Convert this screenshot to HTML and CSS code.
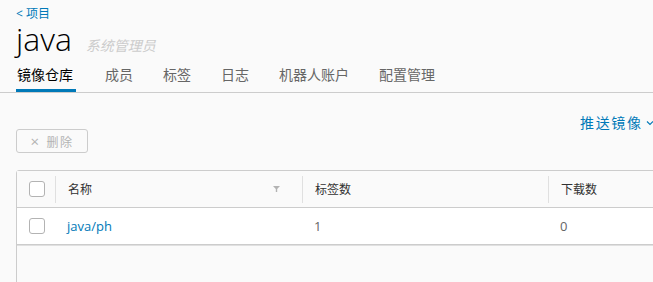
FILE: index.html
```html
<!DOCTYPE html>
<html lang="zh">
<head>
    <meta charset="UTF-8">
    <title>java - 镜像仓库</title>
    <link rel="stylesheet" href="styles.css">
</head>
<body>
    <div class="page">
        <a class="back" href="#">&lt; 项目</a>

        <div class="title">
            <h1>java</h1>
            <span class="role">系统管理员</span>
        </div>

        <ul class="tabs">
            <li class="active">镜像仓库</li>
            <li>成员</li>
            <li>标签</li>
            <li>日志</li>
            <li>机器人账户</li>
            <li>配置管理</li>
        </ul>

        <div class="toolbar">
            <button class="btn-delete" disabled><span class="x">×</span>删除</button>
            <a class="push" href="#">推送镜像
                <svg width="8" height="6" viewBox="0 0 8 6"><path d="M1 1.5 L4 4.5 L7 1.5" fill="none" stroke="#0079b8" stroke-width="1.1"/></svg>
            </a>
        </div>

        <div class="grid">
            <div class="row head">
                <div class="cell check"><span class="box"></span></div>
                <div class="cell">名称
                    <svg class="filter" width="7" height="6" viewBox="0 0 7 6"><path d="M0 0 H7 L4.2 3 V6 H2.8 V3 Z" fill="#b3b3b3"/></svg>
                </div>
                <div class="cell">标签数</div>
                <div class="cell">下载数</div>
            </div>
            <div class="row body-row">
                <div class="cell check"><span class="box"></span></div>
                <div class="cell"><a href="#">java/ph</a></div>
                <div class="cell num">1</div>
                <div class="cell num">0</div>
            </div>
            <div class="foot"></div>
        </div>
    </div>
</body>
</html>
```

FILE: styles.css
```css
html, body {
    overflow: hidden;
}
body {
    margin: 0;
    background-color: #fafafa;
    font-family: "Open Sans", "Noto Sans CJK SC", sans-serif;
    color: #565656;
}
.page {
    padding-left: 16px;
    width: 900px;
}
a {
    color: #0079b8;
    text-decoration: none;
}
.back {
    display: block;
    margin-top: 7px;
    font-size: 12px;
    line-height: 14px;
}
.title {
    display: flex;
    align-items: baseline;
    height: 32px;
    margin-top: 2px;
}
.title h1 {
    margin: 0;
    font-size: 32px;
    font-weight: 300;
    line-height: 32px;
    color: #000;
}
.role {
    margin-left: 14px;
    font-size: 14px;
    font-style: italic;
    color: #ccc;
}
.tabs {
    display: flex;
    margin: 10px 0 0 -16px;
    padding: 0 0 0 16px;
    list-style: none;
    border-bottom: 1px solid #ccc;
    width: 700px;
}
.tabs li {
    font-size: 14px;
    line-height: 20px;
    padding: 0 1px 7px;
    margin-right: 28px;
    color: #666;
}
.tabs li.active {
    padding-right: 3px;
    color: #000;
    box-shadow: inset 0 -3px 0 #0079b8;
}
.toolbar {
    display: flex;
    align-items: flex-start;
    width: 638px;
    margin-top: 21px;
}
.btn-delete {
    margin-top: 15px;
    width: 72px;
    height: 24px;
    padding: 0;
    border: 1px solid #ccc;
    border-radius: 3px;
    background: transparent;
    font-family: inherit;
    font-size: 12px;
    letter-spacing: 0.12em;
    color: #b3b3b3;
}
.btn-delete .x {
    font-size: 15px;
    margin-right: 6px;
}
.push {
    margin-left: auto;
    font-size: 14px;
    line-height: 18px;
    letter-spacing: 0.12em;
}
.push svg {
    margin-left: -2px;
    vertical-align: 2px;
}
.grid {
    margin-top: 17px;
    border: 1px solid #ccc;
    border-radius: 3px 0 0 0;
    width: 800px;
}
.row {
    display: grid;
    grid-template-columns: 38px 247px 246px 246px;
    align-items: center;
}
.head {
    height: 36px;
    border-bottom: 1px solid #ccc;
    box-shadow: 0 1px 0 #e0e0e0;
    background-color: #fafafa;
    font-size: 12px;
    color: #313131;
}
.head .cell + .cell {
    border-left: 1px solid #e0e0e0;
    height: 27px;
    line-height: 27px;
}
.head .cell:nth-child(2) {
    display: flex;
    align-items: center;
    justify-content: space-between;
    padding-right: 22px;
}
.cell {
    padding-left: 12px;
}
.body-row {
    height: 36px;
    background-color: #fff;
    border-bottom: 1px solid #ccc;
    box-shadow: 0 1px 0 #e0e0e0;
    font-size: 13px;
}
.body-row .num {
    color: #666;
}
.box {
    display: block;
    width: 14px;
    height: 14px;
    border: 1px solid #b3b3b3;
    border-radius: 3px;
    background-color: #fff;
}
.foot {
    height: 40px;
}
```
